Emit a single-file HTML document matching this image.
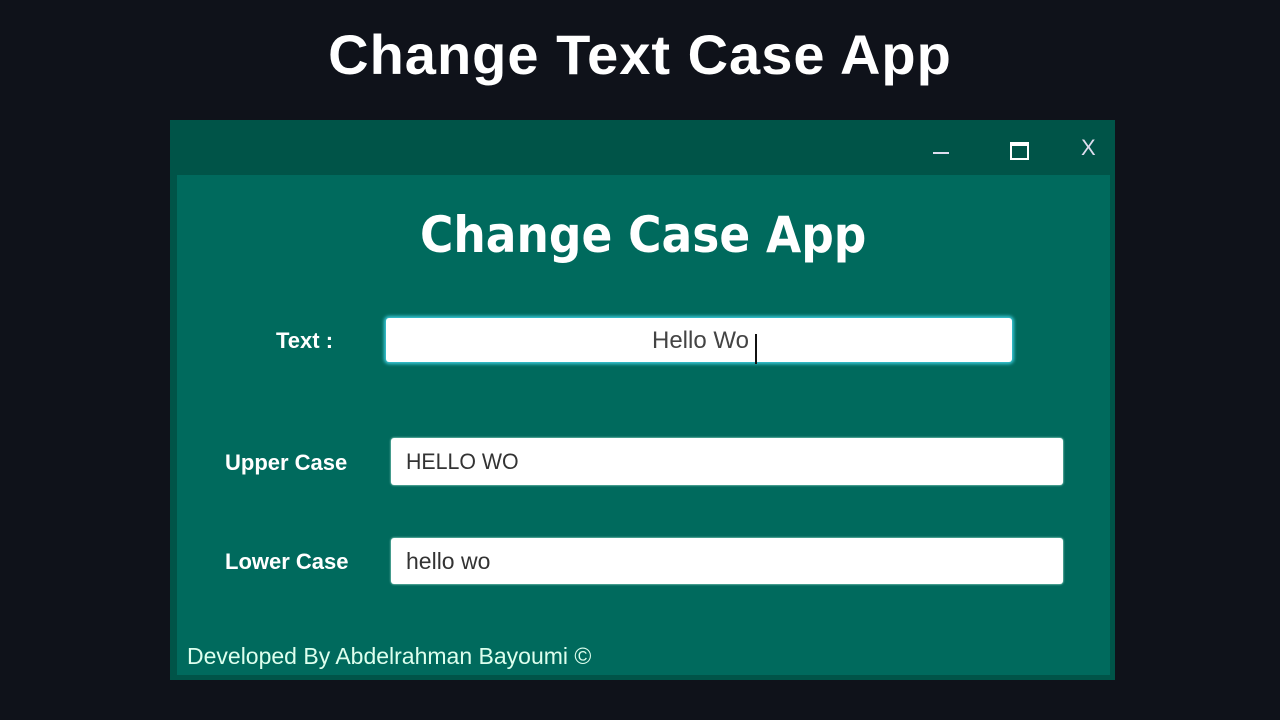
<!DOCTYPE html>
<html><head><style>
body{margin:0;width:1280px;height:720px;background:#0f121a;position:relative;overflow:hidden;font-family:"Liberation Sans",sans-serif}
.h{position:absolute;top:22px;left:0;width:1280px;text-align:center;color:#fff;font-size:56px;font-weight:bold;letter-spacing:1px}
.win{position:absolute;left:170px;top:120px;width:945px;height:560px;background:#005448}
.panel{position:absolute;left:7px;top:55px;width:933px;height:500px;background:#006a5d}
.t{position:absolute;color:#fff;white-space:nowrap}
.box{position:absolute;background:#fff;border-radius:3px;box-shadow:0 0 2px #cfe}
.n{display:inline-block}
</style></head><body>
<div class="h">Change Text Case App</div>
<div class="win">
 <div class="t" style="left:763px;top:32px;width:16px;height:2px;background:#dde"></div>
 <div style="position:absolute;left:840px;top:22px;width:15px;height:12px;border:2px solid #fff;border-top-width:4px"></div>
 <div class="t" style="left:911px;top:15px;font-size:22px;color:#dde">X</div>
 <div class="panel"></div>
 <div class="t" style="left:250px;top:86px;font-size:50px;font-weight:bold;font-family:'DejaVu Sans',sans-serif;transform:scaleX(.91);transform-origin:left">Change Case App</div>
 <div class="t" style="left:106px;top:208px;font-size:22px;font-weight:bold"><span class="n">Text :</span></div>
 <div class="box" style="left:216px;top:198px;width:626px;height:44px;box-shadow:0 0 3px 2px #3ac8d8"></div>
 <div class="t" style="left:482px;top:207px;font-size:24px;color:#444"><span class="n">Hello Wo</span></div>
 <div style="position:absolute;left:585px;top:214px;width:2px;height:30px;background:#111"></div>
 <div class="t" style="left:55px;top:330px;font-size:22px;font-weight:bold"><span class="n">Upper Case</span></div>
 <div class="box" style="left:221px;top:318px;width:672px;height:47px"></div>
 <div class="t" style="left:236px;top:329px;font-size:22px;color:#333"><span class="n" style="transform:scaleX(.97);transform-origin:left">HELLO WO</span></div>
 <div class="t" style="left:55px;top:429px;font-size:22px;font-weight:bold"><span class="n">Lower Case</span></div>
 <div class="box" style="left:221px;top:418px;width:672px;height:46px"></div>
 <div class="t" style="left:236px;top:428px;font-size:23px;color:#333"><span class="n">hello wo</span></div>
 <div class="t" style="left:17px;top:523px;font-size:23px;color:#dfe"><span class="n">Developed By Abdelrahman Bayoumi ©</span></div>
</div>
</body></html>
